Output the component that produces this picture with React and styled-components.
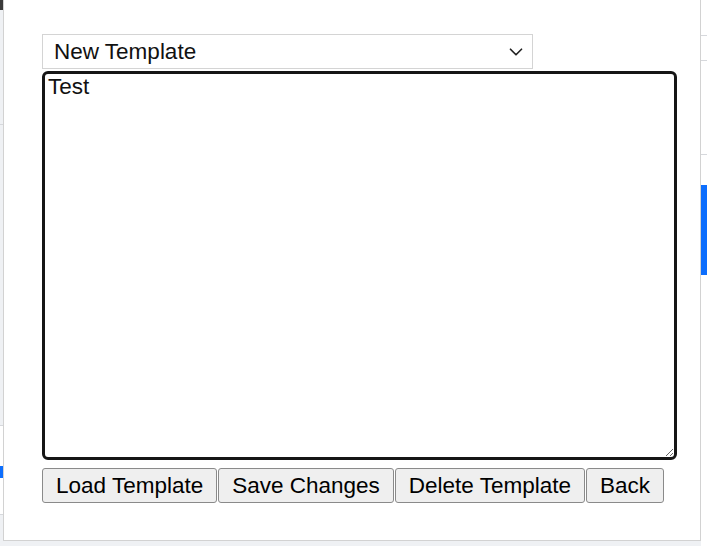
import React, { useState, useRef, useEffect } from 'react';
import styled, { createGlobalStyle } from 'styled-components';
import { ChevronDown } from 'lucide-react';

const GlobalStyle = createGlobalStyle`
  html, body {
    margin: 0;
    padding: 0;
    background: #eff1f4;
    font-family: "Liberation Sans", Arial, sans-serif;
    overflow: hidden;
  }
`;

const Page = styled.div`
  display: flex;
  justify-content: space-between;
  height: 100vh;
`;

const LeftStrip = styled.div`
  width: 3px;
  display: flex;
  flex-direction: column;
`;

const StripBlock = styled.div`
  height: ${(p) => p.h}px;
  background: ${(p) => p.bg || 'transparent'};
  border-bottom: ${(p) => (p.line ? '1px solid #d6d8dc' : 'none')};
  flex-shrink: 0;
`;

const RightStrip = styled.div`
  width: 6px;
  background: #fff;
  display: flex;
  flex-direction: column;
`;

const Overlay = styled.div`
  position: fixed;
  left: 3px;
  top: -10px;
  width: 698px;
  height: 551px;
  box-sizing: border-box;
  background: #fff;
  border: 1px solid #d2d2d2;
  padding: 43px 0 0 38px;
`;

const SelectWrap = styled.div`
  position: relative;
  width: 491px;
`;

const Select = styled.select`
  appearance: none;
  width: 100%;
  height: 35px;
  box-sizing: border-box;
  border: 1px solid #d4d4d4;
  border-radius: 0;
  background: #fff;
  padding: 0 40px 0 11px;
  font-family: inherit;
  font-size: 22.5px;
  color: #111;
  outline: none;
`;

const Chevron = styled(ChevronDown)`
  position: absolute;
  right: 6px;
  top: 7px;
  pointer-events: none;
  color: #222;
`;

const Editor = styled.textarea`
  display: block;
  margin-top: 2px;
  width: 635px;
  height: 389px;
  box-sizing: border-box;
  border: 3px solid #161616;
  border-radius: 6px;
  padding: 0 3px;
  font-family: inherit;
  font-size: 22.5px;
  color: #111;
  caret-color: #111;
  outline: none;
  resize: both;
`;

const Actions = styled.div`
  display: flex;
  gap: 1px;
  margin-top: 8px;
`;

const Button = styled.button`
  height: 35px;
  box-sizing: border-box;
  padding: 0 13px;
  background: #efefef;
  border: 1px solid #8a8a8a;
  border-radius: 3px;
  font-family: inherit;
  font-size: 22.5px;
  color: #000;
  cursor: pointer;
`;

const App = () => {
  const [text, setText] = useState('Test');
  const editorRef = useRef(null);

  useEffect(() => {
    const el = editorRef.current;
    if (el) {
      el.focus();
      el.setSelectionRange(el.value.length, el.value.length);
    }
  }, []);

  return (
    <>
      <GlobalStyle />
      <Page>
        <LeftStrip>
          <StripBlock h={10} bg="#3a3a3a" />
          <StripBlock h={114} line />
          <StripBlock h={300} line />
          <StripBlock h={40} bg="#fff" />
          <StripBlock h={12} bg="#0d6efd" />
          <StripBlock h={36} bg="#fff" line />
        </LeftStrip>
        <RightStrip>
          <StripBlock h={35} line />
          <StripBlock h={24} line />
          <StripBlock h={93} line />
          <StripBlock h={30} />
          <StripBlock h={90} bg="#0d6efd" />
        </RightStrip>
      </Page>
      <Overlay>
        <SelectWrap>
          <Select defaultValue="new">
            <option value="new">New Template</option>
          </Select>
          <Chevron size={22} strokeWidth={1.8} />
        </SelectWrap>
        <Editor
          ref={editorRef}
          value={text}
          onChange={(e) => setText(e.target.value)}
        />
        <Actions>
          <Button type="button">Load Template</Button>
          <Button type="button">Save Changes</Button>
          <Button type="button">Delete Template</Button>
          <Button type="button">Back</Button>
        </Actions>
      </Overlay>
    </>
  );
};

export default App;
